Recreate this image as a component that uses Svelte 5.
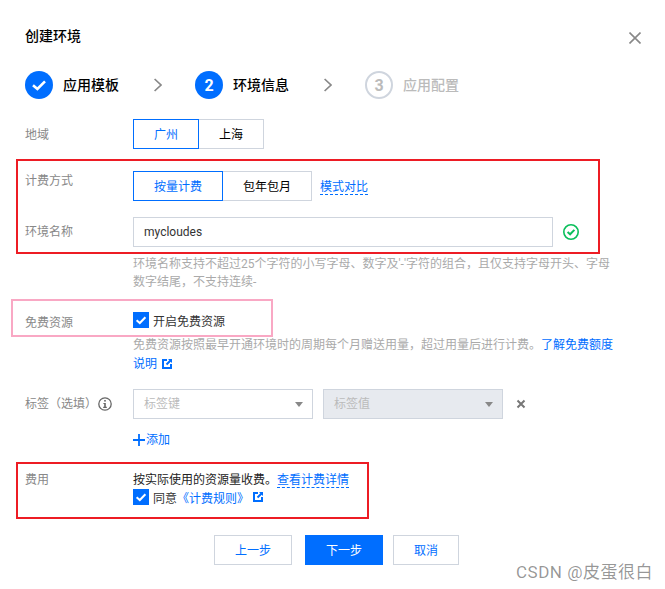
<script>
  const steps = [
    { label: '应用模板', state: 'done' },
    { label: '环境信息', state: 'active', num: 2 },
    { label: '应用配置', state: 'todo', num: 3 }
  ];
</script>

{#snippet extIcon()}
  <svg class="ext" width="10" height="10" viewBox="0 0 10 10">
    <path d="M0 0H5V2H2V8H8V5H10V10H0Z" fill="#006eff" />
    <path d="M6 0H10V4L8.7 2.7L5.2 6.2L3.8 4.8L7.3 1.3Z" fill="#006eff" />
  </svg>
{/snippet}

{#snippet checkbox()}
  <span class="checkbox">
    <svg width="16" height="16" viewBox="0 0 16 16">
      <path d="M3.6 8.2L6.8 11L12.4 5.2" fill="none" stroke="#fff" stroke-width="2" />
    </svg>
  </span>
{/snippet}

<div class="page">
  <div class="dialog">
    <header class="head">
      <h1>创建环境</h1>
      <svg class="close" width="12" height="12" viewBox="0 0 12 12">
        <path d="M0.5 0.5L11.5 11.5M11.5 0.5L0.5 11.5" stroke="#888" stroke-width="1.6" fill="none" />
      </svg>
    </header>

    <div class="steps">
      {#each steps as s, i}
        <div class="step {s.state}">
          <span class="dot">
            {#if s.state === 'done'}
              <svg width="28" height="28" viewBox="0 0 28 28">
                <path d="M8 14.2L12.4 18L20 10.4" fill="none" stroke="#fff" stroke-width="2.6" />
              </svg>
            {:else}
              {s.num}
            {/if}
          </span>
          <span class="step-label">{s.label}</span>
        </div>
        {#if i < steps.length - 1}
          <svg class="chev" width="10" height="14" viewBox="0 0 10 14">
            <path d="M2.6 1L9 7L2.6 13" fill="none" stroke="#888" stroke-width="1.7" />
          </svg>
        {/if}
      {/each}
    </div>

    <div class="row region">
      <div class="label">地域</div>
      <div class="seg">
        <button class="on w66">广州</button>
        <button class="w65">上海</button>
      </div>
    </div>

    <div class="row billing">
      <div class="label">计费方式</div>
      <div class="seg">
        <button class="on w90">按量计费</button>
        <button class="w89">包年包月</button>
        <a class="dash compare" href="#top">模式对比</a>
      </div>
    </div>

    <div class="row name">
      <div class="label">环境名称</div>
      <div class="name-field">
        <div class="input">mycloudes</div>
        <svg class="ok" width="16" height="16" viewBox="0 0 16 16">
          <circle cx="8" cy="8" r="7.2" fill="none" stroke="#0abf5b" stroke-width="1.6" />
          <path d="M4.6 8.1L7.1 10.3L11.4 5.9" fill="none" stroke="#0abf5b" stroke-width="2" />
        </svg>
      </div>
    </div>
    <p class="help">环境名称支持不超过25个字符的小写字母、数字及'-'字符的组合，且仅支持字母开头、字母数字结尾，不支持连续-</p>

    <div class="row free">
      <div class="label">免费资源</div>
      <div class="check-line">{@render checkbox()}<span>开启免费资源</span></div>
    </div>
    <p class="help help-free">免费资源按照最早开通环境时的周期每个月赠送用量，超过用量后进行计费。<a href="#top">了解免费额度说明</a>{@render extIcon()}</p>

    <div class="row tags">
      <div class="label tag-label">
        标签（选填）
        <svg class="info" width="14" height="14" viewBox="0 0 14 14">
          <circle cx="7" cy="7" r="6.2" fill="none" stroke="#666" stroke-width="1.3" />
          <rect x="6.2" y="3" width="1.6" height="1.6" fill="#666" />
          <path d="M5.4 5.9H7.8V9.8H8.8V11H5.2V9.8H6.2V7.1H5.4Z" fill="#666" />
        </svg>
      </div>
      <div class="tag-field">
        <div class="select">标签键<i class="caret"></i></div>
        <div class="select disabled">标签值<i class="caret"></i></div>
        <svg class="del" width="10" height="10" viewBox="0 0 10 10">
          <path d="M1.5 1.5L8.5 8.5M8.5 1.5L1.5 8.5" stroke="#777" stroke-width="2" fill="none" />
        </svg>
      </div>
    </div>

    <div class="row add">
      <a class="add-link" href="#top">
        <svg width="12" height="12" viewBox="0 0 12 12">
          <path d="M0 6H12M6 0V12" stroke="#006eff" stroke-width="1.8" />
        </svg>添加</a>
    </div>

    <div class="row fee">
      <div class="label">费用</div>
      <div class="fee-body">
        <div class="fee-text">按实际使用的资源量收费。<a class="dash" href="#top">查看计费详情</a></div>
        <div class="check-line agree">
          {@render checkbox()}<span>同意</span><a href="#top">《计费规则》</a>{@render extIcon()}
        </div>
      </div>
    </div>

    <footer class="actions">
      <button class="btn w78">上一步</button>
      <button class="btn primary w78 next">下一步</button>
      <button class="btn w66 cancel">取消</button>
    </footer>
  </div>

  <!-- annotations drawn over the screenshot -->
  <div class="mark red mark-a"></div>
  <div class="mark pink mark-b"></div>
  <div class="mark red mark-c"></div>
  <div class="watermark">CSDN @皮蛋很白</div>
</div>

<style>
  :global(body) {
    margin: 0;
    background: #fff;
  }
  .page {
    position: relative;
    width: 665px;
    height: 589px;
    overflow: hidden;
    font-family: Roboto, "Noto Sans CJK SC", sans-serif;
    font-size: 12px;
    color: #000;
  }
  .dialog {
    padding: 25px 0 0 25px;
    box-sizing: border-box;
    height: 100%;
  }
  .head {
    display: flex;
    align-items: center;
    justify-content: space-between;
    width: 616px;
    height: 22px;
  }
  h1 {
    margin: 0;
    font-size: 14px;
    font-weight: 500;
    line-height: 22px;
  }
  .close { margin-top: 4px; }

  .steps {
    display: flex;
    align-items: center;
    margin-top: 24px;
    height: 28px;
  }
  .step {
    display: flex;
    align-items: center;
    gap: 10px;
  }
  .dot {
    width: 28px;
    height: 28px;
    border-radius: 50%;
    box-sizing: border-box;
    display: flex;
    align-items: center;
    justify-content: center;
    background: #006eff;
    color: #fff;
    font-size: 16px;
    font-weight: 700;
  }
  .step-label {
    font-size: 14px;
    font-weight: 500;
    position: relative;
    top: -1px;
  }
  .todo .dot {
    background: #fff;
    border: 2px solid #cfd5de;
    color: #bbb;
  }
  .todo .step-label {
    color: #bbb;
  }
  .chev { margin: 0 33px; }

  .row {
    display: flex;
    width: 616px;
  }
  .label {
    width: 108px;
    flex: none;
    color: #888;
    line-height: 18px;
  }
  .region { margin-top: 20px; }
  .region .label { padding-top: 7px; }
  .billing { margin-top: 22px; }
  .billing .label { padding-top: 1px; }
  .name { margin-top: 16px; }
  .name .label { padding-top: 6px; }

  .seg {
    display: flex;
    align-items: center;
  }
  button {
    font: inherit;
    background: #fff;
    height: 30px;
    padding: 0 0 1px;
    box-sizing: border-box;
    border: 1px solid #cfd5de;
    color: #000;
  }
  .seg button.on {
    border-color: #006eff;
    color: #006eff;
  }
  .seg button + button { border-left: 0; }
  .w66 { width: 66px; }
  .w65 { width: 65px; }
  .w90 { width: 90px; }
  .w89 { width: 89px; }
  .w78 { width: 78px; }

  a {
    color: #006eff;
    text-decoration: none;
  }
  .dash { border-bottom: 1px dashed #006eff; }
  .compare { margin-left: 8px; }

  .name-field {
    display: flex;
    align-items: center;
  }
  .input {
    width: 420px;
    height: 30px;
    box-sizing: border-box;
    border: 1px solid #cfd5de;
    padding-left: 10px;
    line-height: 28px;
    color: #333;
  }
  .ok { margin-left: 10px; }

  .help {
    margin: 8px 0 0 108px;
    width: 482px;
    color: #aaa;
    line-height: 18px;
  }
  .help-free { margin-top: 7px; line-height: 19px; }
  .ext { margin-left: 5px; vertical-align: -1px; }

  .free { margin-top: 22px; height: 16px; }
  .free .label { padding-top: 1px; }
  .check-line {
    display: flex;
    align-items: center;
    gap: 4px;
    color: #333;
    height: 16px;
  }
  .free .check-line span { position: relative; top: -1px; }
  .checkbox {
    width: 16px;
    height: 16px;
    background: #006eff;
    display: block;
  }
  .checkbox svg { display: block; }

  .tags { margin-top: 15px; }
  .tag-label {
    display: flex;
    align-items: center;
    height: 30px;
  }
  .info { margin-left: 1px; }
  .tag-field {
    display: flex;
    align-items: center;
    gap: 10px;
  }
  .select {
    position: relative;
    width: 180px;
    height: 30px;
    box-sizing: border-box;
    border: 1px solid #cfd5de;
    padding-left: 10px;
    line-height: 28px;
    color: #bbb;
  }
  .select.disabled { background: #e7eaef; }
  .caret {
    position: absolute;
    right: 9px;
    top: 12px;
    border: 4px solid transparent;
    border-top: 5px solid #888;
  }
  .del { margin-left: 3px; }

  .add { margin: 12px 0 0 108px; }
  .add-link {
    display: flex;
    align-items: center;
    gap: 1px;
    line-height: 18px;
  }

  .fee { margin-top: 22px; }
  .fee-text { line-height: 18px; color: #222; }
  .agree a { margin-left: -4px; }
  .agree .ext { margin-left: 0; }

  .actions {
    display: flex;
    margin: 30px 0 0 189px;
  }
  .btn { color: #006eff; }
  .primary {
    background: #006eff;
    border-color: #006eff;
    color: #fff;
  }
  .next { margin-left: 13px; }
  .cancel { margin-left: 10px; }

  .mark {
    position: absolute;
    box-sizing: border-box;
    pointer-events: none;
  }
  .red { border: 2px solid #ed1c24; }
  .pink { border: 2px solid #f9a8c4; }
  .mark-a { left: 16px; top: 159px; width: 584px; height: 95px; }
  .mark-b { left: 11px; top: 299px; width: 262px; height: 38px; }
  .mark-c { left: 16px; top: 462px; width: 353px; height: 57px; }
  .watermark {
    position: absolute;
    left: 516px;
    top: 561px;
    font-size: 17px;
    letter-spacing: 0.5px;
    line-height: 22px;
    color: rgba(0, 0, 0, 0.42);
    white-space: nowrap;
  }
</style>
